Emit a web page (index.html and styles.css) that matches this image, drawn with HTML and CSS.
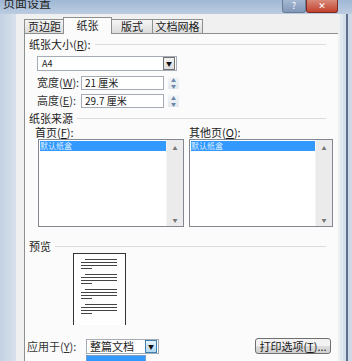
FILE: index.html
```html
<!DOCTYPE html>
<html lang="zh-CN">
<head>
  <meta charset="UTF-8">
  <title>页面设置</title>
  <link rel="stylesheet" href="styles.css">
</head>
<body>
  <div class="window">
    <!-- Title bar -->
    <div class="titlebar">
      <span class="title">页面设置</span>
      <div class="caption-btns">
        <span class="cap help">?</span>
        <span class="cap close">✕</span>
      </div>
    </div>

    <div class="frame">
      <div class="dialog">
        <div class="tabs">
          <div class="tab t1">页边距</div>
          <div class="tab selected">纸张</div>
          <div class="tab t3">版式</div>
          <div class="tab t4">文档网格</div>
        </div>

        <div class="panel">
          <!-- Paper size -->
          <div class="group-title"><span>纸张大小(<u>R</u>):</span></div>
          <div class="row select-row">
            <div class="combo wide"><span>A4</span><span class="drop">▼</span></div>
          </div>
          <div class="row size-row">
            <span class="label">宽度(<u>W</u>):</span>
            <div class="spin"><span class="field">21 厘米</span></div>
            <span class="spinner"><i>▲</i><i>▼</i></span>
          </div>
          <div class="row size-row">
            <span class="label">高度(<u>E</u>):</span>
            <div class="spin"><span class="field">29.7 厘米</span></div>
            <span class="spinner"><i>▲</i><i>▼</i></span>
          </div>

          <!-- Paper source -->
          <div class="group-title source"><span>纸张来源</span></div>
          <div class="lists">
            <div class="list-col first">
              <div class="list-label">首页(<u>F</u>):</div>
              <div class="listbox">
                <div class="items"><div class="item sel">默认纸盒</div></div>
                <div class="scrollbar"><i>▲</i><i>▼</i></div>
              </div>
            </div>
            <div class="list-col other">
              <div class="list-label">其他页(<u>O</u>):</div>
              <div class="listbox">
                <div class="items"><div class="item sel">默认纸盒</div></div>
                <div class="scrollbar"><i>▲</i><i>▼</i></div>
              </div>
            </div>
          </div>

          <!-- Preview -->
          <div class="group-title preview-title"><span>预览</span></div>
          <div class="preview">
            <div class="page">
              <div class="para"><b class="l1"></b><b></b><b></b><b class="short"></b></div>
              <div class="para"><b class="l1"></b><b></b><b></b><b class="short"></b></div>
              <div class="para"><b class="l1"></b><b></b><b></b><b class="short"></b></div>
              <div class="para"><b class="l1"></b><b></b><b></b><b class="short"></b></div>
            </div>
          </div>

          <div class="bottom">
            <span class="label">应用于(<u>Y</u>):</span>
            <div class="combo apply">
              <span>整篇文档</span><span class="drop blue">▼</span>
              <div class="droplist"></div>
            </div>
            <button class="print-btn">打印选项(<u>T</u>)...</button>
          </div>
        </div>
      </div>
      <div class="right-edge"></div>
    </div>
  </div>
</body>
</html>
```

FILE: styles.css
```css
/* General */
body {
  margin: 0;
  width: 352px;
  height: 361px;
  overflow: hidden;
  background: #cfd9e6;
  font-family: "Noto Sans CJK SC", "DejaVu Sans", sans-serif;
  font-size: 11px;
  color: #1a1a1a;
}

u {
  text-decoration: underline;
}

/* Window */
.window {
  display: flex;
  flex-direction: column;
  height: 361px;
}

.titlebar {
  height: 14px;
  flex: none;
  display: flex;
  justify-content: space-between;
  background: linear-gradient(180deg, #9fb8d6, #bccce0);
  overflow: hidden;
}

.title {
  margin: -5px 0 0 3px;
  font-size: 12px;
  line-height: 16px;
  color: #222;
}

.caption-btns {
  display: flex;
  margin-right: 14px;
}

.cap {
  display: flex;
  align-items: center;
  justify-content: center;
  height: 12px;
  font-size: 9px;
  line-height: 12px;
  color: #fff;
  border: 1px solid #6a7d96;
  border-top: none;
  border-radius: 0 0 3px 3px;
}

.help {
  width: 22px;
  background: linear-gradient(180deg, #a5b8d2, #8198b8);
}

.close {
  width: 30px;
  background: linear-gradient(180deg, #d98a7a, #c3412d);
  border-color: #7d2a22;
}

.frame {
  flex: 1;
  display: flex;
  padding-left: 16px;
  background: linear-gradient(90deg, #c3d1e2, #d6dfea 14px);
}

.dialog {
  width: 324px;
  background: #f0f0f0;
  padding: 3px 2px 0 8px;
  box-sizing: border-box;
}

.right-edge {
  flex: 1;
  border-left: 3px solid #dfe7f0;
  background: linear-gradient(90deg, #d5dfea 0, #d5dfea 3px, #5f6f90 3px, #5f6f90 5px, #cfd9e6 5px);
}

/* Tabs */
.tabs {
  display: flex;
  height: 16px;
  align-items: flex-end;
  position: relative;
  z-index: 1;
}

.tab {
  height: 13px;
  line-height: 13px;
  border: 1px solid #8e8f8f;
  border-bottom: none;
  background: linear-gradient(180deg, #f5f5f5, #dcdcdc);
  font-size: 11px;
  text-align: center;
  white-space: nowrap;
  margin-right: -1px;
  box-sizing: content-box;
}

.tab.t1 {
  width: 39px;
}

.tab.selected {
  height: 16px;
  line-height: 15px;
  width: 47px;
  background: #fbfbfb;
  margin: 0 -1px -1px -1px;
  position: relative;
  z-index: 2;
}

.tab.t3 {
  width: 40px;
}

.tab.t4 {
  width: 49px;
}

/* Panel */
.panel {
  flex: 1;
  height: 340px;
  border: 1px solid #8e8f8f;
  border-right: none;
  background: #fbfbfb;
  padding: 3px 0 0 4px;
  box-sizing: border-box;
}

.group-title {
  display: flex;
  align-items: center;
  height: 14px;
  margin-right: 12px;
}

.group-title span {
  font-size: 11px;
  line-height: 14px;
  padding-right: 4px;
  white-space: nowrap;
}

.group-title::after {
  content: "";
  flex: 1;
  height: 1px;
  background: #dcdcdc;
}

.row {
  display: flex;
  align-items: center;
  margin-left: 8px;
}

.select-row {
  margin-top: 5px;
}

.combo {
  display: flex;
  align-items: center;
  justify-content: space-between;
  height: 13px;
  border: 1px solid #a5acb5;
  background: #fff;
  font-size: 9px;
  line-height: 13px;
  padding-left: 4px;
  box-sizing: content-box;
}

.combo.wide {
  width: 134px;
}

.drop {
  width: 10px;
  height: 11px;
  margin-right: 1px;
  border: 1px solid #707070;
  background: linear-gradient(180deg, #f2f2f2, #dcdcdc);
  font-size: 6px;
  line-height: 11px;
  text-align: center;
  color: #111;
}

.size-row {
  margin-top: 5px;
  height: 13px;
}

.label {
  width: 44px;
  font-size: 11px;
  line-height: 13px;
  color: #333;
  white-space: nowrap;
}

.spin {
  width: 78px;
  height: 12px;
  border: 1px solid #a5acb5;
  background: #fff;
  font-size: 10px;
  line-height: 12px;
  padding-left: 3px;
}

.spinner {
  display: flex;
  flex-direction: column;
  margin-left: 4px;
  width: 11px;
  font-size: 5px;
  line-height: 6px;
  color: #6c87aa;
  text-align: center;
  background: linear-gradient(180deg, #f4f6f8, #e3e8ee);
}

.spinner i {
  font-style: normal;
}

.group-title.source {
  margin-top: 4px;
}

/* Paper source lists */
.lists {
  display: flex;
  margin-left: 9px;
}

.list-label {
  height: 14px;
  line-height: 14px;
  font-size: 11px;
  white-space: nowrap;
}

.first .list-label {
  margin-left: -3px;
}

.listbox {
  display: flex;
  height: 86px;
  border: 1px solid #828790;
  background: #fff;
}

.first .listbox {
  width: 144px;
}

.other {
  margin-left: 5px;
}

.other .listbox {
  width: 142px;
}

.items {
  flex: 1;
  padding: 1px 0 0 1px;
}

.item {
  height: 10px;
  line-height: 10px;
  font-size: 8px;
  color: #dfefff;
}

.item.sel {
  background: #3399ff;
}

.scrollbar {
  width: 16px;
  display: flex;
  flex-direction: column;
  justify-content: space-between;
  align-items: center;
  background: #ebebeb;
  border-left: 1px solid #f5f5f5;
  font-size: 5px;
  line-height: 6px;
  color: #777;
  padding: 5px 0 3px;
}

.scrollbar i {
  font-style: normal;
}

/* Preview */
.preview-title {
  margin-top: 12px;
}

.preview {
  margin: 0 0 0 44px;
  height: 72px;
  overflow: hidden;
}

.page {
  width: 53px;
  height: 80px;
  border: 1px solid #333;
  background: #fff;
  padding: 5px 0 0 7px;
  box-sizing: border-box;
}

.para {
  display: flex;
  flex-direction: column;
  gap: 2px;
  margin-bottom: 5px;
}

.para b {
  display: block;
  height: 1px;
  width: 36px;
  background: #444;
}

.para b.l1 {
  width: 32px;
  margin-left: 4px;
}

.para b.short {
  width: 11px;
}

/* Bottom row */
.bottom {
  display: flex;
  align-items: center;
  margin-top: 13px;
  margin-left: -2px;
}

.bottom .label {
  width: 59px;
}

.combo.apply {
  width: 68px;
  height: 13px;
  position: relative;
  font-size: 11px;
  padding-left: 3px;
}

.drop.blue {
  border-color: #3c7fb1;
  background: linear-gradient(180deg, #e5f4fc, #b3d9f2);
}

.droplist {
  position: absolute;
  left: -1px;
  top: 15px;
  width: 58px;
  height: 6px;
  background: #3399ff;
  border: 1px solid #7a9cc7;
}

.print-btn {
  margin-left: auto;
  margin-right: 7px;
  width: 76px;
  height: 16px;
  padding: 0;
  border: 1px solid #707070;
  border-radius: 3px;
  background: linear-gradient(180deg, #f2f2f2 50%, #dddddd 50%, #cfcfcf);
  font-family: inherit;
  font-size: 11px;
  line-height: 14px;
  color: #1a1a1a;
  white-space: nowrap;
}
```
